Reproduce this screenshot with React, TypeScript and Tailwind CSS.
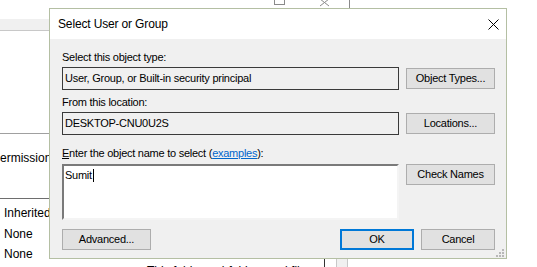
import React from 'react';

const ui = { fontFamily: '"Liberation Sans", Arial, sans-serif' };

function WinButton({ label, primary, className = '' }: { label: React.ReactNode; primary?: boolean; className?: string }) {
  return (
    <div
      className={`flex h-[21px] items-center justify-center bg-[#e1e1e1] text-[11px] tracking-[-0.25px] text-black ${
        primary ? 'border-2 border-[#0078d7]' : 'border border-[#adadad]'
      } ${className}`}
    >
      {label}
    </div>
  );
}

function ReadOnlyBox({ value }: { value: string }) {
  return (
    <div className="flex h-[23px] w-[337px] items-center border border-[#3a3a3a] bg-[#f0f0f0] pl-[2px] text-[11px] tracking-[-0.25px] text-black">
      {value}
    </div>
  );
}

// Resize grip dots in the corner
function Grip() {
  const dots = [
    [6, 0],
    [3, 3],
    [6, 3],
    [0, 6],
    [3, 6],
    [6, 6],
  ];
  return (
    <svg width="8" height="8" className="absolute bottom-[1px] right-[2px]">
      {dots.map(([x, y]) => (
        <rect key={`${x}-${y}`} x={x} y={y} width="2" height="2" fill="#b8b8b8" />
      ))}
    </svg>
  );
}

function App() {
  return (
    <div className="relative h-[267px] w-[537px] overflow-hidden bg-white" style={ui}>
      {/* window behind the dialog */}
      <div className="absolute left-0 top-[19px] h-[12px] w-[49px] border-b border-[#c8c8c8] bg-[#f0f0f0]" />
      <svg width="80" height="9" className="absolute left-[272px] top-0">
        <rect x="2.5" y="-3.5" width="10" height="8" fill="none" stroke="#8a8a8a" />
        <path d="M48 -1 L57 6 M57 -1 L48 6" stroke="#8a8a8a" />
        <path d="M77.5 0 V9" stroke="#8a8a8a" />
      </svg>
      <div className="absolute left-0 top-[133px] h-px w-[49px] bg-[#a0a0a0]" />
      <div className="absolute left-[-8px] top-[150px] text-[12px] leading-[16px] text-black">Permission</div>
      <div className="absolute left-0 top-[198px] h-px w-[49px] bg-[#6e6e6e]" />
      <div className="absolute left-[4px] top-[203px] flex flex-col text-[12px] leading-[20.5px] text-black">
        <span>Inherited from</span>
        <span>None</span>
        <span>None</span>
        <span>None</span>
      </div>
      <div className="absolute left-[147px] top-[263px] text-[12px] leading-[16px] text-black">
        This folder, subfolders and files
      </div>
      <div className="absolute left-[324px] top-[258px] h-[9px] w-px bg-[#333]" />
      <div className="absolute left-[336px] top-[258px] h-[9px] w-[12px] border-x border-[#c8c8c8] bg-[#f0f0f0]" />

      {/* dialog */}
      <div className="absolute left-[49px] top-[8px] flex h-[251px] w-[458px] flex-col border border-[#b4bfa3] bg-[#f0f0f0]">
        <div className="flex h-[30px] items-center justify-between bg-white pl-[8px] pr-[7px]">
          <span className="text-[12px] tracking-[-0.15px] text-black">Select User or Group</span>
          <svg width="11" height="11" viewBox="0 0 11 11">
            <path d="M0.5 0.5 L10.5 10.5 M10.5 0.5 L0.5 10.5" stroke="#000" strokeWidth="1" />
          </svg>
        </div>

        <div className="relative flex flex-1 flex-col pb-[8px] pl-[12px] pr-[11px] pt-[11px]">
          <div className="h-[14px] text-[11px] leading-[14px] tracking-[-0.25px] text-black">Select this object type:</div>
          <div className="mt-[3px] flex items-center gap-[7px]">
            <ReadOnlyBox value="User, Group, or Built-in security principal" />
            <WinButton label="Object Types..." className="w-[89px]" />
          </div>

          <div className="mt-[5px] h-[14px] text-[11px] leading-[14px] tracking-[-0.25px] text-black">From this location:</div>
          <div className="mt-[3px] flex items-center gap-[7px]">
            <ReadOnlyBox value="DESKTOP-CNU0U2S" />
            <WinButton label="Locations..." className="w-[89px]" />
          </div>

          <div className="mt-[11px] h-[14px] text-[11px] leading-[14px] tracking-[-0.25px] text-black">
            <span className="underline">E</span>nter the object name to select (
            <span className="text-[#0066cc] underline">examples</span>):
          </div>
          <div className="mt-[4px] flex items-start gap-[7px]">
            <div className="h-[56px] w-[337px] border-2 border-b-[#f4f4f4] border-l-[#7a7a7a] border-r-[#f4f4f4] border-t-[#7a7a7a] bg-white pl-[1px] pt-[2px]">
              <div className="flex items-center text-[11px] leading-[14px] tracking-[-0.25px] text-black">
                Sumit
                <span className="ml-[1px] inline-block h-[13px] w-px bg-black" />
              </div>
            </div>
            <WinButton label="Check Names" className="w-[89px]" />
          </div>

          <div className="mt-[9px] flex items-center">
            <WinButton label="Advanced..." className="w-[89px]" />
            <div className="flex-1" />
            <WinButton label="OK" primary className="w-[74px]" />
            <WinButton label="Cancel" className="ml-[7px] w-[74px]" />
          </div>
          <Grip />
        </div>
      </div>
    </div>
  );
}

export default App;
